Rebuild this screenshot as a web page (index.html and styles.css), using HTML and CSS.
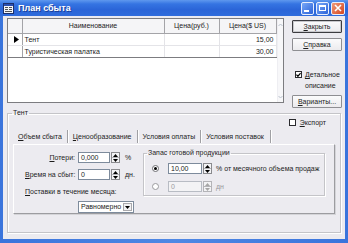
FILE: index.html
```html
<!DOCTYPE html>
<html lang="ru">
<head>
<meta charset="utf-8">
<title>План сбыта</title>
<link rel="stylesheet" href="styles.css">
</head>
<body>
<div class="window">
  <div class="titlebar">
    <svg class="app-icon" width="11" height="11" viewBox="0 0 11 11">
      <rect x="0.5" y="0.5" width="10" height="10" fill="#f4f6fa" stroke="#1c2f6b"/>
      <rect x="1" y="1" width="9" height="2" fill="#2a4fb0"/>
      <rect x="2" y="4" width="3" height="1" fill="#555"/>
      <rect x="6" y="4" width="3" height="1" fill="#555"/>
      <rect x="2" y="6" width="3" height="1" fill="#555"/>
      <rect x="6" y="6" width="3" height="1" fill="#555"/>
      <rect x="2" y="8" width="7" height="1" fill="#555"/>
    </svg>
    <span class="title">План сбыта</span>
    <div class="caption-buttons">
      <span class="cbtn"><span class="glyph-min"></span></span>
      <span class="cbtn"><span class="glyph-max"></span></span>
      <span class="cbtn cbtn-close">
        <svg width="8" height="8" viewBox="0 0 8 8"><path d="M1 1L7 7M7 1L1 7" stroke="#fff" stroke-width="1.6"/></svg>
      </span>
    </div>
  </div>

  <div class="client">
    <div class="top">
      <div class="grid">
        <table class="table">
          <colgroup>
            <col class="c-ind"><col class="c-name"><col class="c-rub"><col class="c-usd">
          </colgroup>
          <thead>
            <tr><th></th><th>Наименование</th><th>Цена(руб.)</th><th>Цена($ US)</th></tr>
          </thead>
          <tbody>
            <tr>
              <td class="ind"><svg width="5" height="7" viewBox="0 0 5 7"><path d="M0 0L5 3.5L0 7Z" fill="#000"/></svg></td>
              <td>Тент</td><td></td><td class="num">15,00</td>
            </tr>
            <tr class="last">
              <td class="ind"></td>
              <td>Туристическая палатка</td><td></td><td class="num">30,00</td>
            </tr>
          </tbody>
        </table>
        <div class="vscroll">
          <svg width="5" height="4" viewBox="0 0 5 4"><path d="M0.5 3L2.5 1L4.5 3" fill="none" stroke="#b8c0cc" stroke-width="1"/></svg>
          <svg width="5" height="4" viewBox="0 0 5 4"><path d="M0.5 1L2.5 3L4.5 1" fill="none" stroke="#b8c0cc" stroke-width="1"/></svg>
        </div>
      </div>

      <div class="side">
        <span class="btn btn-default"><u>З</u>акрыть</span>
        <span class="btn btn-gap"><u>С</u>правка</span>
        <div class="check check-detail">
          <span class="box"><svg width="6" height="6" viewBox="0 0 6 6"><path d="M0.5 2.5L2.3 4.5L5.5 0.8" fill="none" stroke="#000" stroke-width="1.4"/></svg></span>
          <span class="check-text"><u>Д</u>етальное<br>описание</span>
        </div>
        <span class="btn btn-variants"><u>В</u>арианты...</span>
      </div>
    </div>

    <fieldset class="group group-tent">
      <legend class="legend">Тент</legend>
      <div class="export-row">
        <div class="check">
          <span class="box"></span>
          <span class="check-text"><u>Э</u>кспорт</span>
        </div>
      </div>
      <div class="tabs">
        <span class="tab"><u>О</u>бъем сбыта</span>
        <span class="tab"><u>Ц</u>енообразование</span>
        <span class="tab">Условия оплаты</span>
        <span class="tab tab-active">Условия поставок</span>
      </div>
      <div class="panel">
        <div class="left-col">
          <div class="field-row">
            <span class="label"><u>П</u>отери:</span>
            <span class="input">0,000</span>
            <span class="spin">
              <span class="spin-half"><svg width="5" height="3" viewBox="0 0 5 3"><path d="M0 3L2.5 0L5 3Z" fill="#000"/></svg></span>
              <span class="spin-half"><svg width="5" height="3" viewBox="0 0 5 3"><path d="M0 0L2.5 3L5 0Z" fill="#000"/></svg></span>
            </span>
            <span class="unit">%</span>
          </div>
          <div class="field-row row-gap">
            <span class="label"><u>В</u>ремя на сбыт:</span>
            <span class="input">0</span>
            <span class="spin">
              <span class="spin-half"><svg width="5" height="3" viewBox="0 0 5 3"><path d="M0 3L2.5 0L5 3Z" fill="#000"/></svg></span>
              <span class="spin-half"><svg width="5" height="3" viewBox="0 0 5 3"><path d="M0 0L2.5 3L5 0Z" fill="#000"/></svg></span>
            </span>
            <span class="unit">дн.</span>
          </div>
          <div class="supply-label"><u>П</u>оставки в течение месяца:</div>
          <div class="combo">
            <span class="combo-text">Равномерно</span>
            <span class="combo-btn"><svg width="5" height="3" viewBox="0 0 5 3"><path d="M0 0L2.5 3L5 0Z" fill="#000"/></svg></span>
          </div>
        </div>

        <fieldset class="group group-stock">
          <legend class="legend">Запас готовой продукции</legend>
          <div class="radio-row">
            <span class="radio radio-on"><span class="dot"></span></span>
            <span class="input input-wide">10,00</span>
            <span class="spin">
              <span class="spin-half"><svg width="5" height="3" viewBox="0 0 5 3"><path d="M0 3L2.5 0L5 3Z" fill="#000"/></svg></span>
              <span class="spin-half"><svg width="5" height="3" viewBox="0 0 5 3"><path d="M0 0L2.5 3L5 0Z" fill="#000"/></svg></span>
            </span>
            <span class="unit unit-wide">% от месячного объема продаж</span>
          </div>
          <div class="radio-row radio-gap disabled">
            <span class="radio"></span>
            <span class="input input-wide">0</span>
            <span class="spin">
              <span class="spin-half"><svg width="5" height="3" viewBox="0 0 5 3"><path d="M0 3L2.5 0L5 3Z" fill="#a6a6a6"/></svg></span>
              <span class="spin-half"><svg width="5" height="3" viewBox="0 0 5 3"><path d="M0 0L2.5 3L5 0Z" fill="#a6a6a6"/></svg></span>
            </span>
            <span class="unit unit-wide">дн</span>
          </div>
        </fieldset>
      </div>
    </fieldset>
  </div>
</div>
</body>
</html>
```

FILE: styles.css
```css
* { box-sizing: border-box; }
html, body { margin: 0; padding: 0; }
body {
  width: 348px;
  height: 243px;
  overflow: hidden;
  font-family: "Liberation Sans", Arial, sans-serif;
  font-size: 7px;
  line-height: 9px;
  color: #1c1c1c;
  background: #2a62d6;
}
u { text-decoration: underline; text-underline-offset: 1px; }

.window {
  width: 348px;
  height: 243px;
  display: flex;
  flex-direction: column;
  background: linear-gradient(90deg, #3a74dc, #4f88e4 50%, #3a74dc);
}

/* title bar */
.titlebar {
  height: 16px;
  display: flex;
  align-items: center;
  padding: 0 3px 0 3px;
  background: linear-gradient(180deg, #5f98ee 0%, #3574e2 25%, #2b65d8 60%, #2f6cdc 100%);
}
.app-icon { margin-right: 4px; flex: none; }
.title {
  flex: 1;
  color: #fff;
  font-weight: bold;
  font-size: 9px;
  text-shadow: 1px 1px 0 #1a3f9a;
}
.caption-buttons { display: flex; gap: 2px; }
.cbtn {
  width: 13px;
  height: 13px;
  border: 1px solid #e8eefc;
  border-radius: 2px;
  background: linear-gradient(135deg, #78a8f8, #2c62d8);
  display: flex;
  align-items: center;
  justify-content: center;
}
.cbtn-close { width: 14px; background: linear-gradient(135deg, #f09a7a, #d4441e); }
.glyph-min { width: 5px; height: 2px; background: #fff; margin-top: 5px; margin-right: 2px; }
.glyph-max { width: 7px; height: 6px; border: 1px solid #fff; border-top-width: 2px; }

/* client area */
.client {
  flex: 1;
  margin: 0 3px 4px 3px;
  background: #ecebf0;
  padding: 2px 0 0 4px;
  display: flex;
  flex-direction: column;
}
.top {
  height: 91px;
  display: flex;
  align-items: flex-start;
  gap: 8px;
}

/* grid */
.grid {
  width: 277px;
  height: 85px;
  border: 1px solid #7c7c80;
  background: #fff;
  display: flex;
}
.table {
  width: 268px;
  border-collapse: collapse;
  table-layout: fixed;
  align-self: flex-start;
}
.c-ind { width: 14px; }
.c-name { width: 142px; }
.c-rub { width: 55px; }
.c-usd { width: 57px; }
.table th {
  height: 14px;
  padding: 0;
  font-weight: normal;
  text-align: center;
  background: #f5f5f7;
  border-right: 1px solid #a4a4a8;
  border-bottom: 1px solid #a4a4a8;
  white-space: nowrap;
}
.table td {
  height: 12px;
  padding: 0 2px;
  border-right: 1px solid #e4e4e8;
  border-bottom: 1px solid #e4e4e8;
  white-space: nowrap;
}
.table td.ind {
  padding: 0 0 0 6px;
  border-right: 1px solid #a4a4a8;
  vertical-align: middle;
  line-height: 0;
}
.table td.num { text-align: right; }
.table tr.last td { border-bottom: 1px solid #7c7c80; }

.vscroll {
  flex: 1;
  background: #f7f7f9;
  border-left: 1px solid #eeeef2;
  display: flex;
  flex-direction: column;
  justify-content: space-between;
  align-items: center;
  padding: 4px 0 3px;
}

/* side buttons */
.side {
  width: 50px;
  display: flex;
  flex-direction: column;
  align-items: stretch;
  padding-top: 2px;
}
.btn {
  height: 13px;
  display: flex;
  align-items: center;
  justify-content: center;
  background: linear-gradient(#fbfbfc, #ecebee);
  border: 1px solid #8e8e92;
  border-radius: 1px;
}
.btn-default { border-color: #3c3c40; box-shadow: inset 0 0 0 1px #c8c8cc; }
.btn-gap { margin-top: 5px; }
.btn-variants { margin-top: 4px; }

.check { display: flex; align-items: flex-start; gap: 2px; }
.check-detail { margin-top: 18px; padding-left: 3px; line-height: 11px; }
.box {
  width: 7px;
  height: 7px;
  margin-top: 2px;
  flex: none;
  background: #fff;
  border: 1px solid #2a2a2e;
  display: flex;
  align-items: center;
  justify-content: center;
}
.check-text { padding-left: 1px; }

/* group boxes */
.group {
  margin: 0;
  border: 1px solid #c4c4c8;
  box-shadow: inset 1px 1px 0 #fff, 1px 1px 0 #fff;
  min-width: 0;
}
.legend {
  padding: 0 1px;
  line-height: 8px;
}
.group-tent {
  width: 334px;
  height: 124px;
  padding: 0 5px 4px 5px;
  display: flex;
  flex-direction: column;
}
.group-tent > .legend { margin-left: -1px; }

.export-row {
  height: 10px;
  display: flex;
  justify-content: flex-end;
  padding-right: 9px;
  margin-top: 1px;
}
.export-row .box { margin-top: 1px; }
.export-row .check-text { padding-left: 2px; line-height: 9px; }

/* tabs */
.tabs {
  height: 16px;
  display: flex;
  align-items: center;
  padding-left: 0;
}
.tab {
  padding: 0 5px;
  height: 13px;
  line-height: 13px;
  border-right: 1px solid #a0a0a4;
  box-shadow: 1px 0 0 #fff;
}
.tab-active { padding: 0 6px 0 5px; }

/* panel */
.panel {
  flex: 1;
  display: flex;
  align-items: flex-start;
  padding: 5px 0 0 11px;
  border-top: 1px solid #fff;
  border-left: 1px solid #fff;
  border-right: 1px solid #9c9ca0;
  border-bottom: 1px solid #9c9ca0;
  box-shadow: 1px 1px 0 #d4d4d8;
}
.left-col {
  width: 118px;
  flex: none;
  padding-top: 2px;
}
.field-row {
  height: 11px;
  display: flex;
  align-items: center;
}
.row-gap { margin-top: 6px; }
.label { width: 50px; text-align: right; margin-right: 3px; white-space: nowrap; }
.input {
  width: 32px;
  height: 11px;
  line-height: 9px;
  padding: 0 2px;
  background: #fff;
  border: 1px solid #7d8b9c;
}
.spin {
  width: 9px;
  height: 11px;
  margin-left: 1px;
  border: 1px solid #8a8a8e;
  background: #f3f3f5;
  display: flex;
  flex-direction: column;
}
.spin-half {
  flex: 1;
  display: flex;
  align-items: center;
  justify-content: center;
  line-height: 0;
}
.spin-half + .spin-half { border-top: 1px solid #b4b4b8; }
.unit { margin-left: 5px; white-space: nowrap; }

.supply-label { margin-top: 7px; white-space: nowrap; }
.combo {
  margin: 5px 0 0 53px;
  width: 56px;
  height: 12px;
  display: flex;
  background: #fff;
  border: 1px solid #7d8b9c;
}
.combo-text { flex: 1; padding-left: 2px; line-height: 10px; }
.combo-btn {
  width: 9px;
  margin: 1px;
  background: #f1f1f3;
  border: 1px solid #a8a8ac;
  display: flex;
  align-items: center;
  justify-content: center;
}

.group-stock {
  width: 182px;
  height: 47px;
  margin-top: -1px;
  padding: 6px 0 0 8px;
}
.group-stock > .legend { margin-left: -5px; }
.radio-row { height: 11px; display: flex; align-items: center; }
.radio-gap { margin-top: 7px; }
.radio {
  width: 7px;
  height: 7px;
  border-radius: 50%;
  background: #fff;
  border: 1px solid #6e6e72;
  display: flex;
  align-items: center;
  justify-content: center;
  flex: none;
}
.dot { width: 3px; height: 3px; border-radius: 50%; background: #000; }
.input-wide { width: 34px; margin-left: 9px; }
.unit-wide { margin-left: 4px; }
.disabled .input { background: #f3f3f5; color: #9a9a9e; border-color: #b8bcc4; }
.disabled .spin { border-color: #b4b4b8; }
.disabled .unit { color: #9a9a9e; }
.disabled .radio { border-color: #9a9a9e; }
```
